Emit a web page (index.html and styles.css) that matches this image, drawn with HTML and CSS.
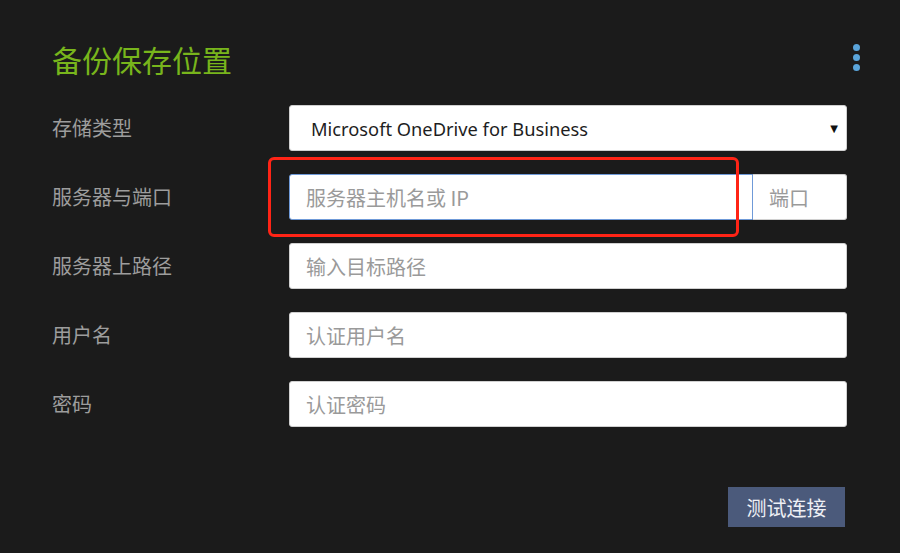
FILE: index.html
```html
<!DOCTYPE html>
<html lang="zh-CN">
<head>
<meta charset="utf-8">
<title>备份保存位置</title>
<link rel="stylesheet" href="styles.css">
</head>
<body>
<div class="page">
  <header class="header">
    <h1 class="title">备份保存位置</h1>
    <div class="menu" aria-label="更多">
      <span class="dot"></span><span class="dot"></span><span class="dot"></span>
    </div>
  </header>
  <form class="form">
    <div class="row">
      <label class="label">存储类型</label>
      <div class="field">
        <div class="select">
          <span class="select-text">Microsoft OneDrive for Business</span>
          <span class="caret">▼</span>
        </div>
      </div>
    </div>
    <div class="row">
      <label class="label">服务器与端口</label>
      <div class="field field-split">
        <input class="input input-host" type="text" placeholder="服务器主机名或 IP">
        <input class="input input-port" type="text" placeholder="端口">
        <div class="highlight"></div>
      </div>
    </div>
    <div class="row">
      <label class="label">服务器上路径</label>
      <div class="field"><input class="input" type="text" placeholder="输入目标路径"></div>
    </div>
    <div class="row">
      <label class="label">用户名</label>
      <div class="field"><input class="input" type="text" placeholder="认证用户名"></div>
    </div>
    <div class="row">
      <label class="label">密码</label>
      <div class="field"><input class="input" type="text" placeholder="认证密码"></div>
    </div>
    <div class="actions">
      <button class="btn" type="button">测试连接</button>
    </div>
  </form>
</div>
</body>
</html>
```
FILE: styles.css
```css
* { box-sizing: border-box; }
html, body {
  margin: 0;
  padding: 0;
  background: #1b1b1b;
  height: 100%;
}
body {
  font-family: "Noto Sans", "Noto Sans CJK SC", sans-serif;
  overflow: hidden;
}
.page {
  padding: 28px 0 0 52px;
}
.header {
  display: flex;
  align-items: center;
  justify-content: space-between;
  height: 62px;
  padding-right: 40px;
}
.title {
  margin: 0;
  font-family: "Noto Sans CJK SC", sans-serif;
  font-weight: 400;
  font-size: 30px;
  line-height: 36px;
  color: #78b51c;
}
.menu {
  display: flex;
  flex-direction: column;
  gap: 3px;
  margin-top: -3px;
}
.dot {
  width: 7px;
  height: 7px;
  border-radius: 50%;
  background: #5aa4da;
}
.form {
  margin-top: 15px;
  padding-right: 53px;
  display: flex;
  flex-direction: column;
  gap: 23px;
}
.row {
  display: grid;
  grid-template-columns: 237px minmax(0, 1fr);
  align-items: center;
  height: 46px;
}
.label {
  font-family: "Noto Sans CJK SC", sans-serif;
  font-size: 20px;
  color: #9d9d9d;
  line-height: 1;
}
.field {
  position: relative;
  display: flex;
  height: 46px;
  min-width: 0;
}
.select {
  flex: 1;
  display: flex;
  align-items: center;
  justify-content: space-between;
  background: #fff;
  border: 1px solid #d0d0d0;
  border-radius: 3px;
  padding: 0 8px 0 21px;
}
.select-text {
  font-family: "Noto Sans", "Noto Sans CJK SC", sans-serif;
  font-size: 18.3px;
  color: #1e1e1e;
}
.caret {
  font-family: "DejaVu Sans", sans-serif;
  font-size: 10px;
  color: #111;
}
.input {
  flex: 1 1 0;
  width: 0;
  min-width: 0;
  height: 46px;
  background: #fff;
  border: 1px solid #d0d0d0;
  border-radius: 3px;
  padding: 0 16px;
  font-family: "Noto Sans CJK SC", sans-serif;
  font-size: 20px;
  color: #333;
  outline: none;
}
.input::placeholder {
  color: #9a9a9a;
}
.input-host {
  flex: 0 0 464px;
  border: 1px solid #6f9ad8;
  border-radius: 3px 0 0 3px;
}
.input-port {
  flex: 1 1 0;
  border-left: none;
  border-radius: 0 3px 3px 0;
}
.highlight {
  position: absolute;
  left: -21px;
  top: -17px;
  width: 471px;
  height: 80px;
  border: 3px solid #ff2416;
  border-radius: 6px;
  pointer-events: none;
}
.actions {
  display: flex;
  justify-content: flex-end;
  margin-top: 37px;
  padding-right: 2px;
}
.btn {
  width: 117px;
  height: 40px;
  border: none;
  border-radius: 0;
  background: #4b5a7b;
  color: #eef0f5;
  font-family: "Noto Sans CJK SC", sans-serif;
  font-size: 20px;
  padding: 0;
  cursor: pointer;
}
```
